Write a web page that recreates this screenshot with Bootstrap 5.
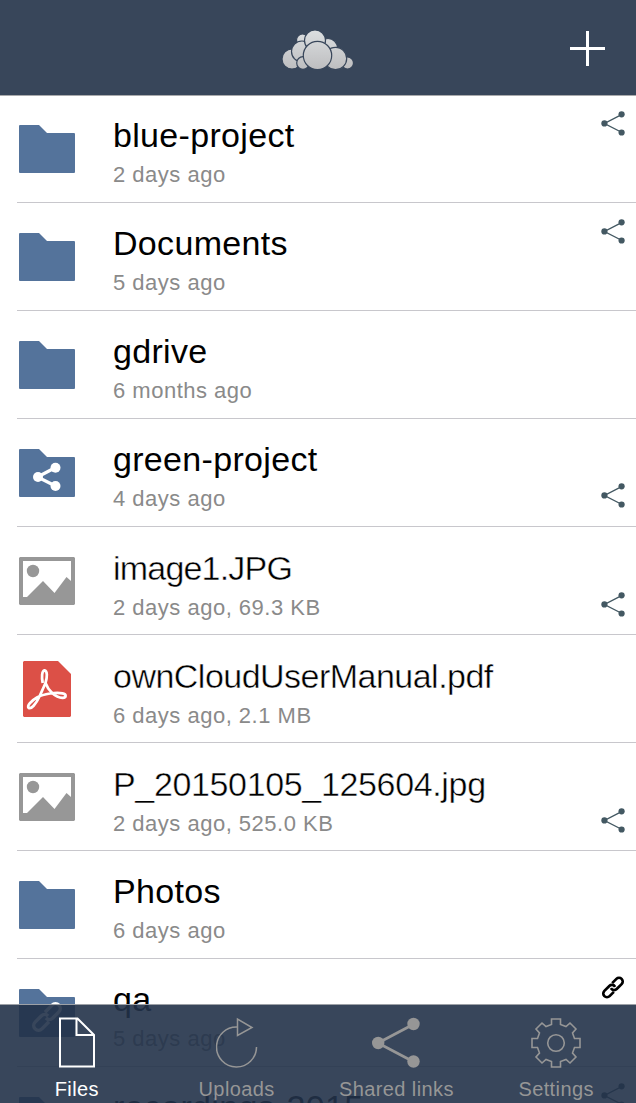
<!DOCTYPE html>
<html lang="en">
<head>
<meta charset="utf-8">
<meta name="viewport" content="width=device-width, initial-scale=1">
<title>Files</title>
<link href="https://cdn.jsdelivr.net/npm/bootstrap@5.3.0/dist/css/bootstrap.min.css" rel="stylesheet">
<style>
body{font-family:"Liberation Sans",Arial,sans-serif;height:1103px;color:#000}
.topbar{height:96px;background:#38465a;border-bottom:1px solid #a9aaac;flex:none}
.topbar svg,.file-row svg,.tabs svg{display:block;flex:none}
.cloud{margin:5px 0 0 -4px}
.plus{margin:2px 31px 0 0}
.spacer{width:67px}
.file-list{margin-top:-1px;min-height:0}
.file-row{height:108px;padding-left:17px}
.row-inner{border-bottom:1px solid #c8c7cc}
.thumb{width:60px;margin-top:30px;padding-left:1px}
.thumb.up{margin-top:29px}
.thumb.pdf{margin-top:26px}
.info{padding-left:36px;padding-top:20px}
.title{font-size:34px;line-height:40px;letter-spacing:.32px;white-space:nowrap}
.thin{-webkit-text-stroke:.45px #fff;letter-spacing:-.35px;padding-top:1px}
.thin.tight{letter-spacing:-.8px}
.thin.snug{letter-spacing:-.52px}
.meta{font-size:22px;line-height:26px;letter-spacing:.5px;color:#8a8a8a;margin-top:7px;white-space:nowrap}
.thin + .meta{margin-top:7px}
.flag{padding-right:10px;padding-top:16px}
.flag.low{padding-top:64px}
.tabs{height:99px;background:rgba(34,50,73,.9) padding-box;border-top:1px solid #9da1a7;z-index:2}
.tabset{width:639px;margin-left:-3px}
.tab{color:#969696;font-size:20px;letter-spacing:.4px;line-height:24px;padding-top:12px;white-space:nowrap}
.tab.active{color:#fff}
.tab span{margin-top:9px}
</style>
</head>
<body class="bg-white overflow-hidden position-relative">
<svg width="0" height="0" class="position-absolute">
  <defs>
    <linearGradient id="cg" gradientUnits="userSpaceOnUse" x1="0" y1="0" x2="0" y2="40"><stop offset="0" stop-color="#dcdfe1"/><stop offset="1" stop-color="#bdbdbf"/></linearGradient>
    <symbol id="folder" viewBox="0 0 56 48"><path fill="#54739b" d="M1 0H20L28 8H55Q56 8 56 9V47Q56 48 55 48H1Q0 48 0 47V1Q0 0 1 0Z"/></symbol>
    <symbol id="share" viewBox="0 0 24 25"><path d="M21 3.3 3.5 12.5 21 21.5" fill="none" stroke="#435862" stroke-width="1.4"/><g fill="#435862"><circle cx="20.6" cy="3.3" r="3.1"/><circle cx="3.4" cy="12.4" r="3.1"/><circle cx="20.6" cy="21.5" r="3.1"/></g></symbol>
    <symbol id="image" viewBox="0 0 56 48"><path fill="#979797" fill-rule="evenodd" d="M1 0H55L56 1V47L55 48H1L0 47V1ZM4 4V40H8L24 24 35.500 36 47.500 20 52 24V4Z"/><circle cx="14" cy="14" r="6.200" fill="#979797"/></symbol>
  </defs>
</svg>
<div class="d-flex flex-column h-100 overflow-hidden">
<header class="topbar d-flex align-items-center justify-content-between">
  <span class="spacer"></span>
  <svg class="cloud" width="72" height="40" viewBox="0 0 72 40"><g fill="url(#cg)" stroke="#38465a" stroke-width="1.200"><circle cx="11" cy="29" r="10"/><circle cx="21.500" cy="10" r="6"/><circle cx="47" cy="18" r="9.500"/><circle cx="21" cy="21.500" r="10.500"/><circle cx="34" cy="10.500" r="10.500"/><circle cx="22" cy="33" r="6.300"/><circle cx="66.500" cy="33" r="6"/><circle cx="54.500" cy="28.500" r="11.200"/><circle cx="36.500" cy="25.500" r="14.200"/></g></svg>
  <svg class="plus" width="35" height="35" viewBox="0 0 35 35"><path d="M17.500 0V35M0 17.500H35" stroke="#fff" stroke-width="3"/></svg>
</header>
<main class="file-list overflow-hidden">
  <div class="file-row"><div class="row-inner d-flex h-100"><div class="thumb"><svg width="58" height="48" viewBox="-1 0 58 48"><use href="#folder" width="56" height="48"/></svg></div><div class="info flex-grow-1"><div class="title">blue-project</div><div class="meta">2 days ago</div></div><div class="flag"><svg width="25" height="25"><use href="#share" width="24" height="25"/></svg></div></div></div>
  <div class="file-row"><div class="row-inner d-flex h-100"><div class="thumb"><svg width="58" height="48" viewBox="-1 0 58 48"><use href="#folder" width="56" height="48"/></svg></div><div class="info flex-grow-1"><div class="title">Documents</div><div class="meta">5 days ago</div></div><div class="flag"><svg width="25" height="25"><use href="#share" width="24" height="25"/></svg></div></div></div>
  <div class="file-row"><div class="row-inner d-flex h-100"><div class="thumb"><svg width="58" height="48" viewBox="-1 0 58 48"><use href="#folder" width="56" height="48"/></svg></div><div class="info"><div class="title">gdrive</div><div class="meta">6 months ago</div></div></div></div>
  <div class="file-row"><div class="row-inner d-flex h-100"><div class="thumb"><svg width="58" height="48" viewBox="-1 0 58 48"><use href="#folder" width="56" height="48"/><path d="M36.500 18.500 18.500 28 36.500 37" fill="none" stroke="#fff" stroke-width="3.200"/><g fill="#fff"><circle cx="36.500" cy="18.700" r="5"/><circle cx="19" cy="28" r="5"/><circle cx="36.500" cy="37" r="5"/></g></svg></div><div class="info flex-grow-1"><div class="title">green-project</div><div class="meta">4 days ago</div></div><div class="flag low"><svg width="25" height="25"><use href="#share" width="24" height="25"/></svg></div></div></div>
  <div class="file-row"><div class="row-inner d-flex h-100"><div class="thumb up"><svg width="58" height="50" viewBox="-1 -1 58 50"><use href="#image" width="56" height="48"/></svg></div><div class="info flex-grow-1"><div class="title thin tight">image1.JPG</div><div class="meta">2 days ago, 69.3 KB</div></div><div class="flag low"><svg width="25" height="26" viewBox="0 -1 25 26"><use href="#share" width="24" height="25"/></svg></div></div></div>
  <div class="file-row"><div class="row-inner d-flex h-100"><div class="thumb pdf"><svg width="58" height="56" viewBox="-1 3 58 56"><path fill="#dc5047" d="M5 3H39L52 16V58L51 59H5L4 58V4Z"/><g fill="none" stroke="#fff" stroke-width="2.700" stroke-linejoin="round"><path d="M23.700 25C22.500 19 22.800 12.800 25.500 12.300 28.600 12.800 28.300 19 26.500 25 29 32 36 39.500 43.500 39.800 47.800 39.500 47.500 36 43.500 35.300 37 34.200 25 35.500 18 39.500 12 43 8 47.500 9.500 49.700 12 52 17 46 20.500 38.500 22.500 34 24.800 29 26.500 25"/></g></svg></div><div class="info flex-grow-1"><div class="title thin snug">ownCloudUserManual.pdf</div><div class="meta">6 days ago, 2.1 MB</div></div></div></div>
  <div class="file-row"><div class="row-inner d-flex h-100"><div class="thumb up"><svg width="58" height="50" viewBox="-1 -1 58 50"><use href="#image" width="56" height="48"/></svg></div><div class="info flex-grow-1"><div class="title thin">P_20150105_125604.jpg</div><div class="meta">2 days ago, 525.0 KB</div></div><div class="flag low"><svg width="25" height="26" viewBox="0 -1 25 26"><use href="#share" width="24" height="25"/></svg></div></div></div>
  <div class="file-row"><div class="row-inner d-flex h-100"><div class="thumb"><svg width="58" height="48" viewBox="-1 0 58 48"><use href="#folder" width="56" height="48"/></svg></div><div class="info"><div class="title">Photos</div><div class="meta">6 days ago</div></div></div></div>
  <div class="file-row"><div class="row-inner d-flex h-100"><div class="thumb"><svg width="58" height="48" viewBox="-1 0 58 48"><use href="#folder" width="56" height="48"/><g transform="translate(28 28) rotate(-45)" fill="none" stroke="#fff" stroke-width="3.400"><path d="M-2 4.800H-12A4.800 4.800 0 0 1-12-4.800H-3A4.800 4.800 0 0 1 1.500 0"/><path d="M2-4.800H12A4.800 4.800 0 0 1 12 4.800H3A4.800 4.800 0 0 1-1.500 0"/></g></svg></div><div class="info flex-grow-1"><div class="title">qa</div><div class="meta">5 days ago</div></div><div class="flag"><svg width="25" height="25" viewBox="0 0 25 25"><g transform="translate(12 12.500) rotate(-45)" fill="none" stroke="#000" stroke-width="2.700"><path d="M-2.500 3.700H-8.500A3.700 3.700 0 0 1-8.500-3.700H-1.500A3.700 3.700 0 0 1 2 1"/><path d="M2.500-3.700H8.500A3.700 3.700 0 0 1 8.500 3.700H1.500A3.700 3.700 0 0 1-2-1"/></g></svg></div></div></div>
  <div class="file-row"><div class="row-inner d-flex h-100"><div class="thumb"><svg width="58" height="48" viewBox="-1 0 58 48"><use href="#folder" width="56" height="48"/></svg></div><div class="info flex-grow-1"><div class="title">recordings-2015</div></div><div class="flag"><svg width="25" height="25"><use href="#share" width="24" height="25"/></svg></div></div></div>
</main>
</div>
<nav class="tabs position-absolute bottom-0 start-0 end-0">
  <div class="tabset d-flex">
    <a class="tab active col-3 d-flex flex-column align-items-center text-decoration-none"><svg width="36" height="51" viewBox="0 0 36 51"><path transform="translate(0 .5)" d="M1 1H18.500L35 17.500V49H1ZM17.500 1V17.500H35" fill="none" stroke="#fff" stroke-width="2"/></svg><span>Files</span></a>
    <a class="tab col-3 d-flex flex-column align-items-center text-decoration-none"><svg width="42" height="51" viewBox="0 0 42 51"><path d="M21.500 10A20 20 0 1 0 40.500 30M21.500 2V18.500L36 10.500Z" fill="none" stroke="#969696" stroke-width="1.500"/></svg><span>Uploads</span></a>
    <a class="tab col-3 d-flex flex-column align-items-center text-decoration-none"><svg width="48" height="51" viewBox="0 0 48 51"><path d="M42 7 6 26 42 45" fill="none" stroke="#969696" stroke-width="2.800"/><g fill="#969696"><circle cx="41.500" cy="7" r="6.200"/><circle cx="6.200" cy="26" r="6.200"/><circle cx="41.500" cy="44.500" r="6.200"/></g></svg><span>Shared links</span></a>
    <a class="tab col-3 d-flex flex-column align-items-center text-decoration-none"><svg width="50" height="51" viewBox="-25 -26 50 51"><path fill="none" stroke="#969696" stroke-width="1.600" d="M-4.500-24H4.500V-18.500L10-16.500 14-20 20-14 16.500-10 18.500-4.500H24V4.500H18.500L16.500 10 20 14 14 20 10 16.500 4.500 18.500V24H-4.500V18.500L-10 16.500-14 20-20 14-16.500 10-18.500 4.500H-24V-4.500H-18.500L-16.500-10-20-14-14-20-10-16.500-4.500-18.500Z"/><circle r="8.300" fill="none" stroke="#969696" stroke-width="1.600"/></svg><span>Settings</span></a>
  </div>
</nav>
<script src="https://cdn.jsdelivr.net/npm/bootstrap@5.3.0/dist/js/bootstrap.bundle.min.js"></script>
</body>
</html>
